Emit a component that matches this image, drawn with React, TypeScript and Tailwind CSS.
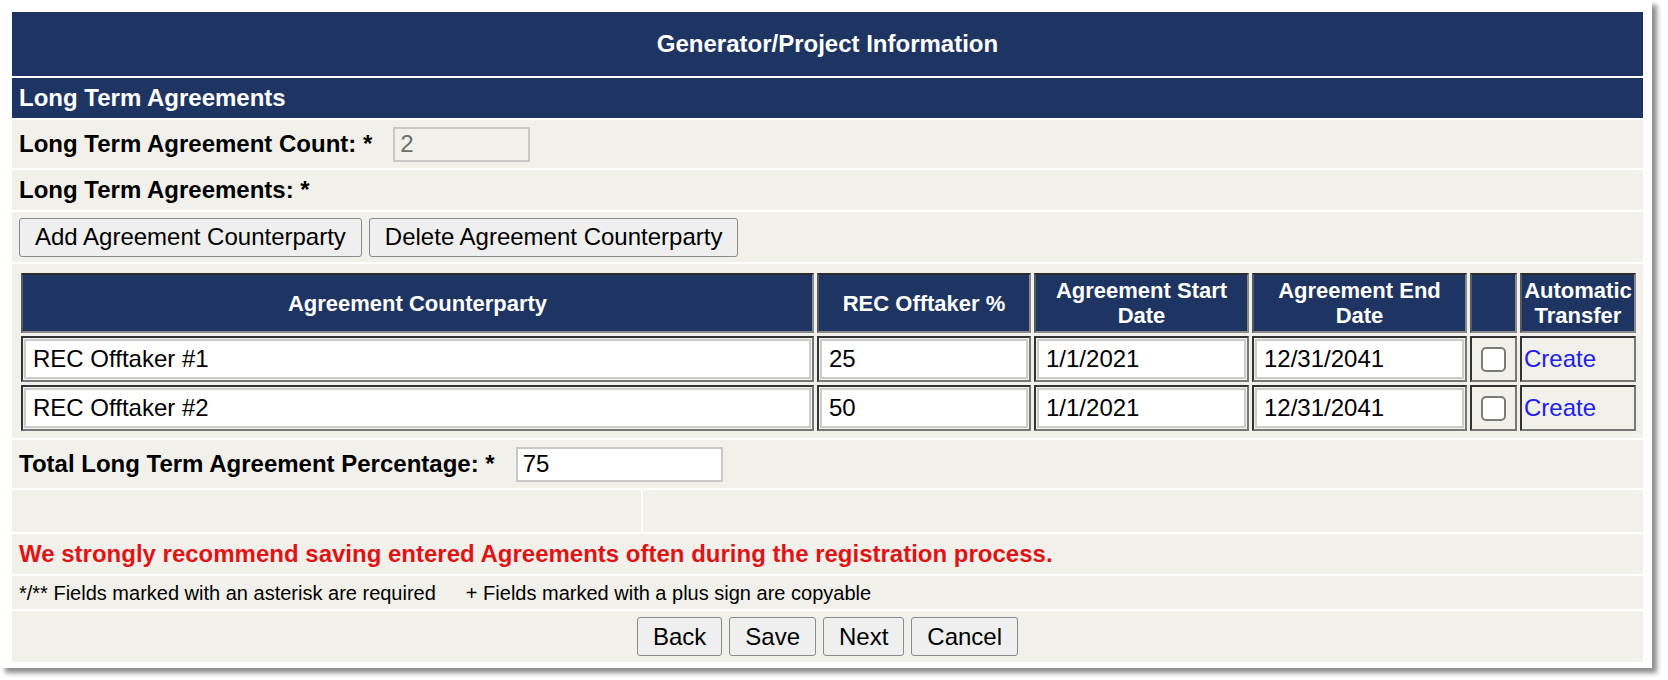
import React from "react";

const rows = [
  { name: "REC Offtaker #1", pct: "25", start: "1/1/2021", end: "12/31/2041" },
  { name: "REC Offtaker #2", pct: "50", start: "1/1/2021", end: "12/31/2041" },
];

const headCell =
  "bg-[#1e3564] text-white font-bold text-[22px] leading-[25px] text-center border-2 border-t-[#2b2b2b] border-l-[#5a5a5a] border-r-[#8a8a8a] border-b-[#8a8a8a]";
const bodyCell =
  "bg-[#f1f0eb] p-[1px] border-2 border-t-[#333] border-l-[#333] border-r-[#777] border-b-[#777]";
const cellInput =
  "w-full h-[40px] bg-white border-2 border-[#cccccc] px-[7px] text-[24px] text-black outline-none";
const btn =
  "h-[39px] px-[15px] bg-[#efefef] border border-[#8a8a8a] rounded-[3px] text-[24px] text-black leading-none";

function Row({ children, className = "" }: { children?: React.ReactNode; className?: string }) {
  return <div className={"bg-[#f1f0eb] px-[7px] flex items-center " + className}>{children}</div>;
}

export default function App() {
  return (
    <div className="min-h-[680px] bg-white" style={{ fontFamily: '"Liberation Sans", Arial, sans-serif' }}>
      <div className="w-[1652px] h-[668px] bg-white pl-[12px] pt-[12px] shadow-[5px_5px_5px_rgba(0,0,0,0.45)]">
        <div className="w-[1631px] flex flex-col gap-[2px] bg-white">
          <div className="h-[64px] bg-[#1e3564] flex items-center justify-center text-white font-bold text-[24px]">
            Generator/Project Information
          </div>
          <div className="h-[40px] bg-[#1e3564] px-[7px] flex items-center text-white font-bold text-[24px]">
            Long Term Agreements
          </div>

          <Row className="h-[48px]">
            <span className="font-bold text-[24px] text-black">Long Term Agreement Count: *</span>
            <input
              disabled
              value="2"
              readOnly
              className="ml-[21px] w-[137px] h-[35px] bg-[#f1f0eb] border-2 border-[#c8c8c8] px-[5px] text-[24px] text-[#6d6d6d]"
            />
          </Row>

          <Row className="h-[40px]">
            <span className="font-bold text-[24px] text-black">Long Term Agreements: *</span>
          </Row>

          <Row className="h-[50px] gap-[7px]">
            <button className={btn}>Add Agreement Counterparty</button>
            <button className={btn}>Delete Agreement Counterparty</button>
          </Row>

          <div className="bg-[#f1f0eb] px-[6px] pt-[6px] pb-[4px]">
            <table className="w-full border-separate border-spacing-[3px] table-fixed">
              <colgroup>
                <col className="w-[793px]" />
                <col className="w-[214px]" />
                <col className="w-[215px]" />
                <col className="w-[215px]" />
                <col className="w-[47px]" />
                <col className="w-[116px]" />
              </colgroup>
              <thead>
                <tr className="h-[60px]">
                  <th className={headCell}>Agreement Counterparty</th>
                  <th className={headCell}>REC Offtaker %</th>
                  <th className={headCell}>Agreement Start Date</th>
                  <th className={headCell}>Agreement End Date</th>
                  <th className={headCell}></th>
                  <th className={headCell}>Automatic Transfer</th>
                </tr>
              </thead>
              <tbody>
                {rows.map((r) => (
                  <tr key={r.name}>
                    <td className={bodyCell}>
                      <input className={cellInput} defaultValue={r.name} />
                    </td>
                    <td className={bodyCell}>
                      <input className={cellInput} defaultValue={r.pct} />
                    </td>
                    <td className={bodyCell}>
                      <input className={cellInput} defaultValue={r.start} />
                    </td>
                    <td className={bodyCell}>
                      <input className={cellInput} defaultValue={r.end} />
                    </td>
                    <td className={bodyCell}>
                      <div className="flex justify-center">
                        <span className="w-[25px] h-[25px] bg-white border-2 border-[#7a7a7a] rounded-[5px]" />
                      </div>
                    </td>
                    <td className={bodyCell + " px-[2px]"}>
                      <a href="#" className="text-[24px] text-[#2020ee]">Create</a>
                    </td>
                  </tr>
                ))}
              </tbody>
            </table>
          </div>

          <Row className="h-[48px]">
            <span className="font-bold text-[24px] text-black">Total Long Term Agreement Percentage: *</span>
            <input
              defaultValue="75"
              className="ml-[21px] w-[207px] h-[35px] bg-white border-2 border-[#c8c8c8] px-[5px] text-[24px] text-black"
            />
          </Row>

          <div className="h-[42px] flex gap-[2px]">
            <div className="w-[629px] bg-[#f1f0eb]" />
            <div className="flex-1 bg-[#f1f0eb]" />
          </div>

          <Row className="h-[40px]">
            <span className="font-bold text-[24px] text-[#e01414]">
              We strongly recommend saving entered Agreements often during the registration process.
            </span>
          </Row>

          <Row className="h-[33px]">
            <span className="text-[20px] text-black">*/** Fields marked with an asterisk are required</span>
            <span className="text-[20px] text-black ml-[30px]">+ Fields marked with a plus sign are copyable</span>
          </Row>

          <Row className="h-[51px] justify-center gap-[7px]">
            <button className={btn}>Back</button>
            <button className={btn}>Save</button>
            <button className={btn}>Next</button>
            <button className={btn}>Cancel</button>
          </Row>
        </div>
      </div>
    </div>
  );
}
